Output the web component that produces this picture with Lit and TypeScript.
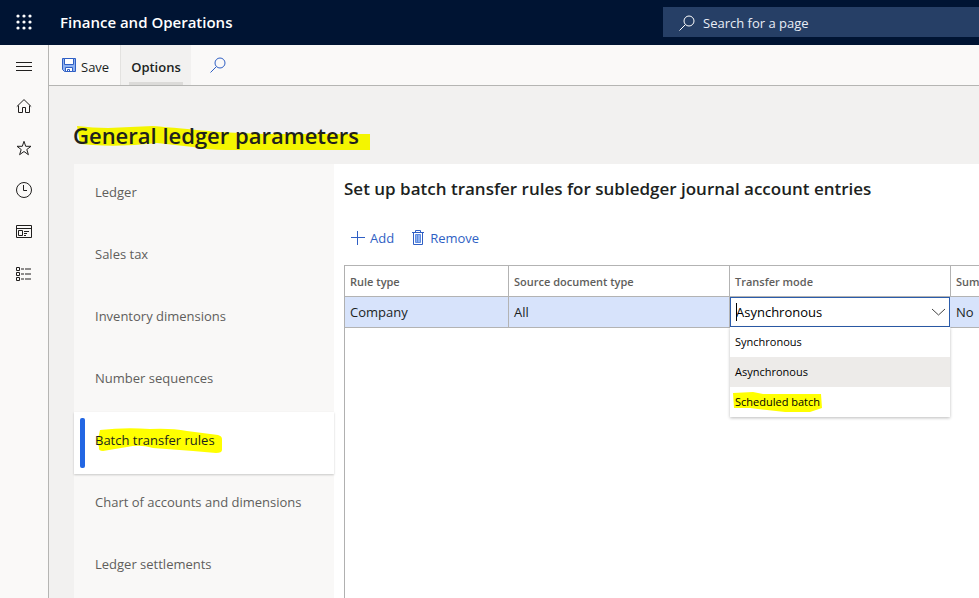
import { LitElement, html, css, svg } from "lit";
import { customElement, state } from "lit/decorators.js";
import { classMap } from "lit/directives/class-map.js";

const railIcons = [
  {
    label: "Expand navigation",
    art: svg`<path d="M0 4.500h16M0 8.500h16M0 12.500h16" />`,
  },
  {
    label: "Home",
    art: svg`<path d="M.8 8.600 8 1.600l7.200 7M2.500 7.500v7h4v-5h3v5h4v-7" />`,
  },
  {
    label: "Favorites",
    art: svg`<path d="M8 1.300 9.700 6.300H15L10.800 9.500 12.400 14.700 8 11.500 3.600 14.700 5.200 9.500 1 6.300H6.300Z" />`,
  },
  {
    label: "Recent",
    art: svg`<circle cx="8" cy="8" r="7.500" /><path d="M7.500 3v5.500H11" />`,
  },
  {
    label: "Workspaces",
    art: svg`<path d="M.5 1.500h15v12H.5ZM.5 4.500h15M2.500 6.500h4v5h-4ZM8 7.500h5M8 9.500h3M8 11.500h2" />`,
  },
  {
    label: "Modules",
    art: svg`<path d="M.5 1.500h3v3h-3ZM.5 6.500h3v3h-3ZM.5 11.500h3v3h-3ZM5 3h3M9 3h6M5 8h3M9 8h6M5 13h3M9 13h6" />`,
  },
];

const sections = [
  "Ledger",
  "Sales tax",
  "Inventory dimensions",
  "Number sequences",
  "Batch transfer rules",
  "Chart of accounts and dimensions",
  "Ledger settlements",
];

const modes = ["Synchronous", "Asynchronous", "Scheduled batch"];

const magnifier = html`<svg class="icon" viewBox="0 0 16 16" aria-hidden="true">
  <circle cx="10" cy="6" r="5" /><path d="M6.300 9.700.5 15.500" />
</svg>`;

@customElement("app-root")
export class AppRoot extends LitElement {
  @state() private section = "Batch transfer rules";
  @state() private mode = "Asynchronous";

  static styles = css`
    :host {
      display: flex;
      flex-direction: column;
      height: 100vh;
      overflow: hidden;
      background: #f2f1f0;
      color: #201f1e;
      font: 13px/20px "Open Sans", "Noto Sans", sans-serif;
    }
    * {
      box-sizing: border-box;
    }
    button,
    input,
    select {
      font: inherit;
      color: inherit;
      border: 0;
      padding: 0;
      margin: 0;
      background: none;
      outline: 0;
    }
    h1,
    h2 {
      margin: 0;
      font-weight: 600;
    }
    .icon {
      width: 16px;
      height: 16px;
      flex: none;
      display: block;
      fill: none;
      stroke: currentColor;
      overflow: visible;
    }
    .top {
      flex: none;
      display: flex;
      align-items: center;
      height: 45px;
      padding-bottom: 2px;
      background: #001433;
      color: #fff;
    }
    .waffle {
      width: 48px;
      height: 43px;
      display: grid;
      place-items: center;
    }
    .waffle .icon {
      fill: #fff;
      stroke: none;
    }
    .brand {
      flex: 1;
      padding-left: 12px;
      font-size: 15px;
      font-weight: 600;
    }
    .search {
      display: flex;
      align-items: center;
      gap: 8px;
      width: 316px;
      height: 30px;
      padding: 2px 0 0 16px;
      background: #263f66;
    }
    .search input {
      flex: 1;
      min-width: 0;
      font-size: 13px;
    }
    .search input::placeholder {
      color: #e9edf5;
      opacity: 1;
    }
    .body {
      flex: 1;
      min-height: 0;
      display: flex;
    }
    .rail {
      flex: none;
      width: 49px;
      border-right: 1px solid #b5b5b3;
      background: #faf9f8;
      display: flex;
      flex-direction: column;
    }
    .rail button {
      height: 42px;
      display: grid;
      place-items: center;
    }
    .rail button:first-child {
      height: 40px;
      padding-top: 2px;
    }
    .page {
      flex: 1;
      min-width: 0;
      display: flex;
      flex-direction: column;
    }
    .commands {
      flex: none;
      display: flex;
      height: 41px;
      border-bottom: 1px solid #b5b5b3;
      background: #faf9f8;
    }
    .commands button {
      display: flex;
      align-items: center;
      gap: 4px;
      padding: 4px 11px 0 12px;
    }
    .commands .save {
      border-right: 1px solid #e3e2e0;
    }
    .save .icon {
      margin-bottom: 4px;
    }
    .commands .options {
      position: relative;
      padding: 4px 10px 0;
      background: #f2f1f0;
      font-weight: 600;
    }
    .options::after {
      content: "";
      position: absolute;
      left: 8px;
      right: 8px;
      bottom: 0;
      height: 3px;
      background: #dcdbd9;
    }
    .commands .find {
      padding: 0 19px;
    }
    .blue,
    .find,
    .tools {
      color: #2f5fc4;
    }
    .title {
      flex: none;
      height: 78px;
      padding: 33px 24px 0;
      font-size: 22px;
      line-height: 32px;
    }
    .marked {
      position: relative;
      display: inline-block;
      isolation: isolate;
    }
    .marker {
      position: absolute;
      left: 0;
      top: 0;
      z-index: -1;
      overflow: visible;
      fill: #ff0;
    }
    .title .marker {
      fill: #f4f500;
    }
    .form {
      flex: 1;
      min-height: 0;
      display: flex;
      margin-left: 25px;
    }
    .sections {
      flex: none;
      width: 260px;
      background: #f9f8f7;
    }
    .sections button {
      position: relative;
      display: block;
      width: 100%;
      height: 62px;
      padding: 0 21px 6px;
      text-align: left;
      color: #605e5c;
    }
    .sections .current {
      background: #fff;
      color: #201f1e;
      box-shadow: 0 1px 2px #0003;
    }
    .sections .current::before {
      content: "";
      position: absolute;
      left: 6px;
      top: 6px;
      bottom: 6px;
      width: 5px;
      border-radius: 2px;
      background: #2266e3;
    }
    .content {
      flex: 1;
      min-width: 0;
      display: flex;
      flex-direction: column;
      padding-left: 10px;
      background: #fff;
    }
    h2 {
      margin-top: 12px;
      font-size: 17px;
      line-height: 26px;
    }
    .tools {
      display: flex;
      gap: 16px;
      margin: 26px 0 17px 6px;
    }
    .tools button {
      display: flex;
      align-items: center;
      gap: 4px;
    }
    .grid {
      flex: 1;
      overflow: hidden;
      border-left: 1px solid #b0b0b0;
    }
    table {
      table-layout: fixed;
      width: 820px;
      border-collapse: separate;
      border-spacing: 0;
    }
    .c1 {
      width: 164px;
    }
    .c2 {
      width: 221px;
    }
    th,
    td {
      height: 31px;
      padding: 0 5px;
      text-align: left;
      border-right: 1px solid #b3b3b3;
      border-bottom: 1px solid #b3b3b3;
    }
    th {
      height: 32px;
      padding-top: 2px;
      border-top: 1px solid #b3b3b3;
      font-size: 11px;
      font-weight: 600;
      color: #605e5c;
    }
    td {
      background: #d7e3fb;
    }
    .cell {
      position: relative;
      padding: 0;
      border-right-color: #d7e3fb;
    }
    .combo {
      display: flex;
      align-items: center;
      height: 30px;
      border: 1px solid #2b5cab;
      padding-right: 3px;
      background: #fff;
      color: #000;
    }
    .combo .icon {
      color: #444;
    }
    .combo::before {
      content: "";
      width: 1px;
      height: 18px;
      margin: 0 -1px 0 5px;
      background: #000;
    }
    .combo select {
      flex: 1;
      appearance: none;
      height: 28px;
    }
    .menu {
      position: absolute;
      left: 0;
      right: 0;
      top: 30px;
      background: #fff;
      box-shadow: 0 1px 3px #0004;
    }
    .menu button {
      display: block;
      width: 100%;
      height: 30px;
      padding: 0 5px;
      text-align: left;
      font-size: 11px;
      color: #000;
    }
    .menu .picked {
      background: #edebe9;
    }
  `;

  private mark(text: string) {
    if (text === "Batch transfer rules")
      return html`<span class="marked"
        ><svg class="marker" width="130" height="28" viewBox="0 0 130 28" aria-hidden="true">
          <path d="M5 0Q30 -3 55 -1 76 -2 92 1L123 5Q127 6 127 9V20Q127 23 121 23L98 21 58 18Q45 14 32 17L8 21Q3 21 4 17L1 10 4 5Z" /></svg
        >${text}</span
      >`;
    if (text === "Scheduled batch")
      return html`<span class="marked"
        ><svg class="marker" width="92" height="22" viewBox="0 0 92 22" aria-hidden="true">
          <path d="M-2 1 18 0 28 2H86L87 16 75 20H50L32 18 15 16H-1Z" /></svg
        >${text}</span
      >`;
    return text;
  }

  render() {
    return html`
      <header class="top">
        <button class="waffle" aria-label="App launcher">
          <svg class="icon" viewBox="0 0 16 16">
            ${[2, 8, 14].map((y) =>
              [2, 8, 14].map((x) => svg`<circle cx=${x} cy=${y} r="1.600" />`)
            )}
          </svg>
        </button>
        <div class="brand">Finance and Operations</div>
        <label class="search"
          >${magnifier}<input type="search" placeholder="Search for a page" aria-label="Search for a page"
        /></label>
      </header>
      <div class="body">
        <nav class="rail" aria-label="Main">
          ${railIcons.map(
            (i) => html`<button aria-label=${i.label}>
              <svg class="icon" viewBox="0 0 16 16">${i.art}</svg>
            </button>`
          )}
        </nav>
        <main class="page">
          <div class="commands">
            <button class="save">
              <svg class="icon blue" viewBox="0 0 16 16">
                <path fill="#8fb2f0" d="M1.500 1.500h13v13H3.500L1.500 12.500Z" />
                <path fill="#fff" d="M3.500 1.500h9v6h-9ZM4.500 10.500h7v4h-7Z" />
                <path d="M6.500 14.500v-2h2v2" />
              </svg>
              Save
            </button>
            <button class="options">Options</button>
            <button class="find" aria-label="Find">${magnifier}</button>
          </div>
          <h1 class="title">
            <span class="marked"
              ><svg class="marker" width="300" height="32" viewBox="0 0 300 32" aria-hidden="true">
                <path d="M4 7Q20 9 35 9L80 7Q105 9 145 13L190 15H297V31H205L153 31Q135 31 120 28L84 24Q50 28 20 26L7 25Z" /></svg
              >General ledger parameters</span
            >
          </h1>
          <div class="form">
            <nav class="sections" aria-label="Parameter sections">
              ${sections.map(
                (s) => html`<button
                  class=${classMap({ current: s === this.section })}
                  @click=${() => (this.section = s)}
                >
                  ${this.mark(s)}
                </button>`
              )}
            </nav>
            <section class="content">
              <h2>Set up batch transfer rules for subledger journal account entries</h2>
              <div class="tools">
                <button>
                  <svg class="icon" viewBox="0 0 16 16"><path d="M1 7.500h14M7.500 1v14" /></svg>Add
                </button>
                <button>
                  <svg class="icon" viewBox="0 0 16 16">
                    <path d="M2 2.500h12M5.500 2.500v-2h5v2M3.500 2.500v12h9v-12" />
                    <path fill="#8fb2f0" stroke="#5f8be0" d="M5.500 4.500h5v8h-5ZM7.500 4.500v8" />
                  </svg>
                  Remove
                </button>
              </div>
              <div class="grid">
                <table>
                  <colgroup>
                    <col class="c1" />
                    <col class="c2" />
                    <col class="c2" />
                    <col />
                  </colgroup>
                  <thead>
                    <tr>
                      <th>Rule type</th>
                      <th>Source document type</th>
                      <th>Transfer mode</th>
                      <th>Sum</th>
                    </tr>
                  </thead>
                  <tbody>
                    <tr>
                      <td>Company</td>
                      <td>All</td>
                      <td class="cell">
                        <div class="combo">
                          <select
                            aria-label="Transfer mode"
                            @change=${(e: Event) =>
                              (this.mode = (e.target as HTMLSelectElement).value)}
                          >
                            ${modes.map(
                              (m) => html`<option ?selected=${m === this.mode}>${m}</option>`
                            )}
                          </select>
                          <svg class="icon" viewBox="0 0 16 16" aria-hidden="true">
                            <path d="M2 5l6.500 6L15 5" />
                          </svg>
                        </div>
                        <div class="menu">
                          ${modes.map(
                            (m) => html`<button
                              class=${classMap({ picked: m === this.mode })}
                              @click=${() => (this.mode = m)}
                            >
                              ${this.mark(m)}
                            </button>`
                          )}
                        </div>
                      </td>
                      <td>No</td>
                    </tr>
                  </tbody>
                </table>
              </div>
            </section>
          </div>
        </main>
      </div>
    `;
  }
}
